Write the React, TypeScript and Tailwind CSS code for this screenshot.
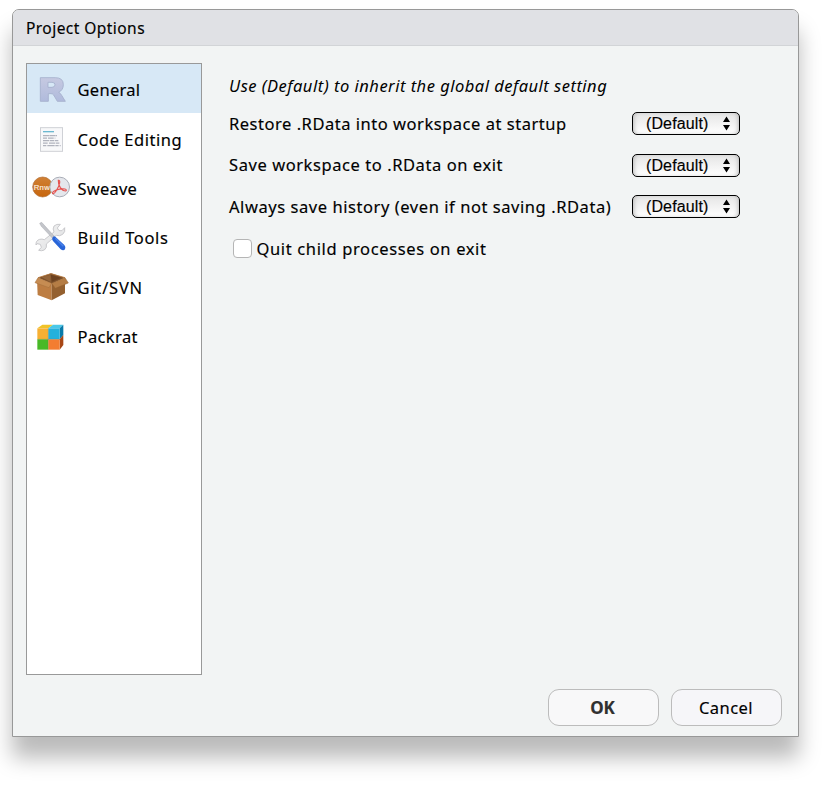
import type { ReactNode } from "react";

const label = "whitespace-nowrap leading-none";

function RIcon() {
  return (
    <svg width="51" height="49" viewBox="3 12 153 147">
      <defs>
        <linearGradient id="r" x1="0" y1="0" x2="0" y2="1">
          <stop offset="0" stopColor="#c6c9e1" />
          <stop offset="1" stopColor="#b0bbdc" />
        </linearGradient>
      </defs>
      <path
        d="M43 53H88Q112 53 112 74Q112 90 98 97Q103 99 107 106L118 124H94L83 105Q80 101 75 101H67V124H43ZM66 67V82H78Q87 81 87 74.500Q87 67 78 67Z"
        fill="url(#r)"
        stroke="#a3aecb"
        strokeWidth="2.500"
        strokeLinejoin="round"
      />
    </svg>
  );
}

function CodeIcon() {
  return (
    <svg width="51" height="50" viewBox="3 9 153 150">
      <rect x="43.500" y="53" width="66" height="71" fill="#f8f8fa" stroke="#cfd1d6" strokeWidth="3" />
      <path d="M51 65H84" stroke="#6cb8d0" strokeWidth="4" />
      <g stroke="#b0b2bd" strokeWidth="3.500">
        <path d="M51 77H93" strokeDasharray="20 1 15 1" />
        <path d="M51 84.500H88" strokeDasharray="12 3 17 3" />
        <path d="M51 92H97" strokeDasharray="18 2 14 2" />
        <path d="M51 99.500H100" strokeDasharray="14 4 19 2" />
        <path d="M51 107H104" strokeDasharray="10 3 22 2" />
      </g>
    </svg>
  );
}

function SweaveIcon() {
  return (
    <svg width="51" height="49" viewBox="3 9 153 147">
      <defs>
        <linearGradient id="rnw" x1="0" y1="0" x2="0" y2="1">
          <stop offset="0" stopColor="#d08035" />
          <stop offset="1" stopColor="#c7660d" />
        </linearGradient>
      </defs>
      <circle cx="50" cy="81" r="30" fill="url(#rnw)" stroke="#ad662b" strokeWidth="2" />
      <text x="23" y="89" textLength="48" fontSize="23" fill="#fdf0e2" stroke="#fdf0e2" strokeWidth="0.500" className="font-['Liberation_Sans',sans-serif]">
        Rnw
      </text>
      <circle cx="101" cy="81" r="29.500" fill="#e5e7ec" stroke="#a9adb7" strokeWidth="3" />
      <path
        d="M97 61Q102 60 101 69Q99 79 92 90Q84 103 80 101Q77 96 91 90Q106 85 117 87Q124 90 119 93Q110 93 103 83Q96 72 97 61Z"
        fill="none"
        stroke="#e65350"
        strokeWidth="3.500"
      />
    </svg>
  );
}

function ToolsIcon() {
  return (
    <svg width="51" height="49" viewBox="3 6 153 147">
      <defs>
        <linearGradient id="steel" x1="0" y1="0" x2="1" y2="1">
          <stop offset="0" stopColor="#f5f5f5" />
          <stop offset="1" stopColor="#dddee0" />
        </linearGradient>
      </defs>
      <path
        d="M84 48Q92 41 103 43L94 54L99 62L108 62L116 53Q119 66 110 73Q101 80 91 76L61 102Q64 113 55 120Q47 124 38 121L46 112L43 103L33 101L30 105Q29 91 41 88Q48 86 55 89L84 66Q79 57 84 48Z"
        fill="url(#steel)"
        stroke="#c0c1c4"
        strokeWidth="2.500"
      />
      <path d="M41 40L47 37L85 79L79 84L46 49Z" fill="#c3c5ca" stroke="#a9abb0" strokeWidth="1.500" />
      <path d="M79 84Q82 76 88 80L115 105Q121 112 117 118Q112 124 104 118L81 93Q77 89 79 84Z" fill="#2865d8" />
      <path d="M88 85L112 109" stroke="#4b83ea" strokeWidth="4" />
    </svg>
  );
}

function BoxIcon() {
  return (
    <svg width="51" height="50" viewBox="3 -3 153 150">
      <path d="M36 47L75 34L117 47L77 65Z" fill="#7c502a" />
      <path d="M47 46L74 38L74 60Z" fill="#94653a" />
      <path d="M74 38L105 47L78 59Z" fill="#6d4220" />
      <path d="M33 52L77 66V115L35 99Z" fill="#bd7d42" />
      <path d="M77 66L117 52V94L77 115Z" fill="#94602f" />
      <path d="M36 47L27 62L69 77L77 64Z" fill="#c68c52" stroke="#a36c38" strokeWidth="1.500" />
      <path d="M77 64L117 47L127 63L88 79Z" fill="#b57d45" stroke="#936030" strokeWidth="1.500" />
      <path d="M36 47L75 35L117 47" fill="none" stroke="#b7793e" strokeWidth="2.500" />
    </svg>
  );
}

function PackratIcon() {
  return (
    <svg width="51" height="49" viewBox="3 -3 153 147">
      <path d="M34 49L49 38H81L67 49Z" fill="#f0c329" />
      <path d="M67 49L81 38H112L101 49Z" fill="#4bc8e8" />
      <path d="M101 49L112 38V69L101 82Z" fill="#087aa9" />
      <path d="M101 82L112 69V99L101 113Z" fill="#a84615" />
      <path d="M34 49H67V82H34Z" fill="#f7b032" />
      <path d="M67 49H101V82H67Z" fill="#24b1dc" />
      <path d="M34 82H67V113H34Z" fill="#48b927" />
      <path d="M67 82H101V113H67Z" fill="#f37d31" />
      <path d="M67 49V113M34 82H101" stroke="#78652b" strokeOpacity=".35" strokeWidth="2" />
    </svg>
  );
}

function NavItem({ icon, text, size, spacing, selected }: { icon: ReactNode; text: string; size: string; spacing: string; selected?: boolean }) {
  return (
    <div className={`flex items-center ${size} ${selected ? "bg-[#d7e8f6]" : ""}`}>
      <div className="w-[50.5px] shrink-0">{icon}</div>
      <span className={`${label} ${spacing}`}>{text}</span>
    </div>
  );
}

function SettingRow({ text, className, spacing }: { text: string; className: string; spacing: string }) {
  return (
    <div className={`flex h-[23px] items-center justify-between ${className}`}>
      <span className={`${label} ${spacing}`}>{text}</span>
      <button className="flex h-[23px] w-[108px] items-center justify-between rounded-[5px] border border-black bg-linear-to-b from-[#e5e5e5] to-white pr-2 pl-[13px] font-['Liberation_Sans',Arial,sans-serif] text-[16px] shadow-[inset_-3px_0_4px_-2px_#bbb,inset_3px_0_4px_-2px_#bbb]">
        <span className={`${label} tracking-[0.12px]`}>(Default)</span>
        <svg width="9" height="15" viewBox="0 0 9 15">
          <path d="M4.500 .5L8 6H1ZM4.500 14.500L1 9H8Z" fill="#000" />
        </svg>
      </button>
    </div>
  );
}

export default function App() {
  return (
    <div className="h-[786px] w-[824px] overflow-hidden bg-white pt-[9px] pl-3 font-['Noto_Sans',sans-serif] text-[16.5px] text-black [-webkit-text-stroke:0.15px]">
      <div className="flex h-[728px] w-[787px] flex-col rounded-t-[7px] border border-[#989898] bg-[#f2f4f4] shadow-[0_21px_21px_rgba(0,0,0,0.27)]">
        <div className="flex h-9 shrink-0 items-center rounded-t-[6px] border-b border-[#d2d4d7] bg-[#e0e1e5] pl-[13px]">
          <span className={`${label} mt-[3px] text-[15.5px] tracking-[0.45px]`}>Project Options</span>
        </div>
        <div className="flex pt-[17px] pl-[13px]">
          <nav className="h-[612px] w-[176px] shrink-0 border border-[#999] bg-white">
            <NavItem icon={<RIcon />} text="General" size="h-[49px]" spacing="mt-[3px] tracking-[0.3px]" selected />
            <NavItem icon={<CodeIcon />} text="Code Editing" size="h-[50px]" spacing="mt-1 tracking-[0.54px]" />
            <NavItem icon={<SweaveIcon />} text="Sweave" size="h-[49px]" spacing="mt-[3px] tracking-[0.2px]" />
            <NavItem icon={<ToolsIcon />} text="Build Tools" size="h-[49px]" spacing="mt-[3px] tracking-[0.64px]" />
            <NavItem icon={<BoxIcon />} text="Git/SVN" size="h-[50px]" spacing="mt-1 tracking-[0.8px]" />
            <NavItem icon={<PackratIcon />} text="Packrat" size="h-[49px]" spacing="mt-[3px] tracking-[0.4px]" />
          </nav>
          <main className="ml-[27px] w-[511px] pt-[15px]">
            <p className={`${label} h-4 italic tracking-[0.49px] [-webkit-text-stroke:0]`}>Use (Default) to inherit the global default setting</p>
            <SettingRow text="Restore .RData into workspace at startup" className="mt-[18px]" spacing="mt-0.5 tracking-[0.52px]" />
            <SettingRow text="Save workspace to .RData on exit" className="mt-[19px]" spacing="-mt-px tracking-[0.57px]" />
            <SettingRow text="Always save history (even if not saving .RData)" className="mt-[18px]" spacing="mt-0.5 tracking-[0.56px]" />
            <label className="mt-[21px] ml-1 flex items-center">
              <span className="size-[19px] rounded-[4px] border border-[#b5b5b5] bg-white" />
              <span className={`${label} mt-0.5 ml-[4.5px] tracking-[0.64px]`}>Quit child processes on exit</span>
            </label>
          </main>
        </div>
        <div className="mt-[14px] mr-4 flex justify-end gap-3">
          <button className="h-[37px] w-[111px] rounded-[11px] border border-[#bcbcbc] bg-[#f8f8f9] pr-0.5 text-[17px] font-bold text-[#303030]">OK</button>
          <button className="h-[37px] w-[111px] rounded-[11px] border border-[#bcbcbc] bg-[#f6f6f9] pt-0.5 pr-px tracking-[0.45px]">Cancel</button>
        </div>
      </div>
    </div>
  );
}
